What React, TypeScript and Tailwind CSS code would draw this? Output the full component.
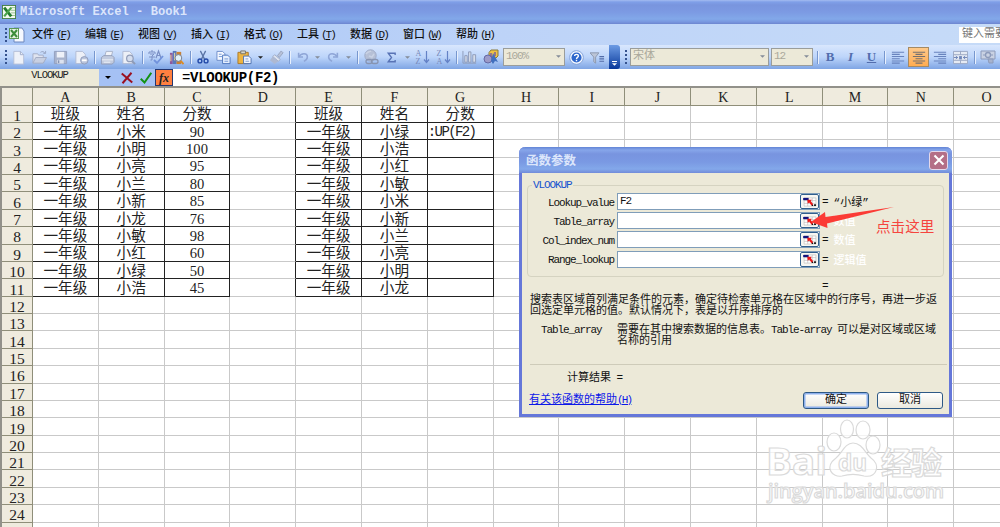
import React from "react";

type CellValue = string | number;

const columns = "ABCDEFGHIJKLMNO".split("");
const ROW_COUNT = 24;

const leftTable: CellValue[][] = [
  ["班级", "姓名", "分数"],
  ["一年级", "小米", 90],
  ["一年级", "小明", 100],
  ["一年级", "小亮", 95],
  ["一年级", "小兰", 80],
  ["一年级", "小新", 85],
  ["一年级", "小龙", 76],
  ["一年级", "小敏", 98],
  ["一年级", "小红", 60],
  ["一年级", "小绿", 50],
  ["一年级", "小浩", 45],
];

const rightTable: CellValue[][] = [
  ["班级", "姓名", "分数"],
  ["一年级", "小绿", ":UP(F2)"],
  ["一年级", "小浩", ""],
  ["一年级", "小红", ""],
  ["一年级", "小敏", ""],
  ["一年级", "小米", ""],
  ["一年级", "小新", ""],
  ["一年级", "小兰", ""],
  ["一年级", "小亮", ""],
  ["一年级", "小明", ""],
  ["一年级", "小龙", ""],
];

const menus = [
  { label: "文件", hotkey: "F" },
  { label: "编辑", hotkey: "E" },
  { label: "视图", hotkey: "V" },
  { label: "插入", hotkey: "I" },
  { label: "格式", hotkey: "O" },
  { label: "工具", hotkey: "T" },
  { label: "数据", hotkey: "D" },
  { label: "窗口", hotkey: "W" },
  { label: "帮助", hotkey: "H" },
];

const args = [
  { name: "Lookup_value", value: "F2", result: "“小绿”", filled: true },
  { name: "Table_array", value: "", result: "数值", filled: false },
  { name: "Col_index_num", value: "", result: "数值", filled: false },
  { name: "Range_lookup", value: "", result: "逻辑值", filled: false },
];

const Svg: React.FC<{ children: React.ReactNode; className?: string }> = ({
  children,
  className = "size-[15px]",
}) => (
  <svg viewBox="0 0 16 16" fill="none" className={`shrink-0 ${className}`}>
    {children}
  </svg>
);

// Narrow latin text inside of the 11px interface text
const Latin: React.FC<{ children: React.ReactNode }> = ({ children }) => (
  <span className="tracking-[-1.1px]">{children}</span>
);

const ExcelLogo: React.FC = () => (
  <Svg className="size-[14px]">
    <rect x="0.5" y="0.5" width="15" height="15" fill="#f4faf0" stroke="#3f7d3c" />
    <path d="M10 3h5M10 6h5M10 9h5M10 12h5" stroke="#8fba89" />
    <path d="M2.5 3 10.5 13" stroke="#237a2b" strokeWidth="3.2" />
    <path d="M10.5 3 2.5 13" stroke="#4aa34b" strokeWidth="2.6" />
  </Svg>
);

const NewIcon = () => (
  <Svg>
    <path d="M3 1.5h7l3.500 3.500v10h-10.500z" fill="#eef1f8" stroke="#b5bfd8" />
    <path d="M10 1.5v3.500h3.500" stroke="#9faccb" />
  </Svg>
);

const OpenIcon = () => (
  <Svg>
    <path d="M1 14V4h5l1 1.500h5V8" fill="#dfe4f0" stroke="#a5aec5" />
    <path d="M1 14 4 8h11.500l-3.500 6z" fill="#c8d0e2" stroke="#a2abc2" />
    <path d="M9 2.500c2-1.500 4-1 5 1.500M12 3.500h2.500V1" stroke="#98a4c1" />
  </Svg>
);

const SaveIcon = () => (
  <Svg>
    <path d="M1.500 1.500h13v13h-13z" fill="#a8b3cd" stroke="#929fbe" />
    <path d="M4 2h8v6H4z" fill="#eef1f8" />
    <path d="M4.500 10.500h7v4h-7z" fill="#dce2ef" />
    <path d="M6 11v3" stroke="#8491b2" strokeWidth="1.5" />
  </Svg>
);

const PermissionIcon = () => (
  <Svg>
    <path d="M2 1.500h7l3 3v10H2z" fill="#edf0f7" stroke="#b1bbd3" />
    <circle cx="11" cy="11" r="4" fill="#bac4db" stroke="#909dbb" />
    <path d="M8.500 11h5" stroke="#fff" strokeWidth="2" />
  </Svg>
);

const PrintIcon = () => (
  <Svg>
    <path d="M5 7 6.500 1.500h7L12 7" fill="#f1f3f8" stroke="#a8b1c8" />
    <path d="M1.500 8 4 6h9l2 2v5l-2 2H1.500z" fill="#c2cbdf" stroke="#939eb9" />
    <path d="M2 10.500h12M4 13h7" stroke="#f0f3f9" />
  </Svg>
);

const PreviewIcon = () => (
  <Svg>
    <path d="M2 1.500h7l3 3v10H2z" fill="#edf0f7" stroke="#b1bbd3" />
    <circle cx="9.5" cy="9" r="3.5" fill="#d6deee" stroke="#929eb9" strokeWidth="1.3" />
    <path d="m12 12 3 3" stroke="#8e9ab5" strokeWidth="2" />
  </Svg>
);

const SpellIcon = () => (
  <Svg className="size-[16px]">
    <path d="M1 3h6M1 3v2M7 3v2M4 1v2M2 5h4L4 7v4H2.500M1 8h6" stroke="#7a8fc4" />
    <path d="m8 9 2.500-7L13 9M9 6.500h3.500" stroke="#7a8fc4" strokeWidth="1.2" />
    <path d="m6 11 3 3 6-7" stroke="#7192dc" strokeWidth="1.8" />
  </Svg>
);

const ResearchIcon = () => (
  <Svg>
    <path d="M1 3h3v12H1z" fill="#8b59a0" />
    <path d="M4 1h4v14H4z" fill="#5b79ba" />
    <path d="M8 2h5v13H8z" fill="#c98235" />
    <path d="M2 5v7M6 3v8" stroke="#f0dda0" />
    <circle cx="10" cy="8.5" r="3.6" fill="#e2f0f8" stroke="#727c8f" />
    <path d="m12.500 11.500 3 3.500" stroke="#dc8b25" strokeWidth="2" />
  </Svg>
);

const CutIcon = () => (
  <Svg className="size-[14px]">
    <path d="m5 1 5 10M11 1 6 11" stroke="#5b74a5" strokeWidth="1.5" />
    <circle cx="4.5" cy="12.5" r="2.2" stroke="#234aa8" strokeWidth="1.6" />
    <circle cx="11.5" cy="12.5" r="2.2" stroke="#234aa8" strokeWidth="1.6" />
  </Svg>
);

const CopyIcon = () => (
  <Svg>
    <path d="M1 1.500h6L9.500 4v7H1z" fill="#f6f9ff" stroke="#6c8cc9" />
    <path d="M7 5.500h5.500L15 8v6.500H7z" fill="#e6effd" stroke="#4d75bd" />
    <path d="M3 4.500h3M3 7h4M9 9.500h4M9 12h4" stroke="#6f95d5" />
  </Svg>
);

const PasteIcon = () => (
  <Svg>
    <path d="M1 2.500h11v12H1z" fill="#edb441" stroke="#a9782b" />
    <path d="M4 1h5v3H4z" fill="#d7d6cd" stroke="#777265" />
    <path d="M7 6.500h5.500L15 9v5.500H7z" fill="#f3f7ff" stroke="#4c70b0" />
    <path d="M9 9.500h3M9 12h4" stroke="#7b9bd2" />
  </Svg>
);

const BrushIcon = () => (
  <Svg>
    <path d="m9 6 4-5 2 2-4 5z" fill="#b7c1d8" stroke="#98a4be" />
    <path d="m6 5 6 5-2 2-6-5z" fill="#dde3ef" stroke="#9eabc5" />
    <path d="M4 7 1 11l5 4 4-3z" fill="#aeb9d2" />
  </Svg>
);

const UndoIcon = () => (
  <Svg className="size-[14px]">
    <path d="M3 3v5h5" stroke="#8fa6d7" strokeWidth="1.8" />
    <path d="M3 8c3-5 10-5 10 0 0 3-2 4-4 5" stroke="#8fa6d7" strokeWidth="1.8" />
  </Svg>
);

const RedoIcon = () => (
  <Svg className="size-[14px]">
    <path d="M13 3v5H8" stroke="#8fa6d7" strokeWidth="1.8" />
    <path d="M13 8C10 3 3 3 3 8c0 3 2 4 4 5" stroke="#8fa6d7" strokeWidth="1.8" />
  </Svg>
);

const LinkIcon = () => (
  <Svg className="size-[16px]">
    <circle cx="7.5" cy="6.5" r="5.7" fill="#b6c0d6" stroke="#a0adc9" />
    <path d="M3 5c2-3 4-2 5-3M6 7l3 1 2-3" stroke="#c9d2e4" strokeWidth="1.5" />
    <rect x="3" y="10.5" width="6" height="4" rx="2" stroke="#8794b1" strokeWidth="1.3" />
    <rect x="8.5" y="10.5" width="6.5" height="4" rx="2" stroke="#8794b1" strokeWidth="1.3" />
  </Svg>
);

const SumIcon = () => (
  <Svg className="size-[13px]">
    <path d="M12.500 5V2.800H4L8 8l-4 5.200h8.500V11" stroke="#5873b5" strokeWidth="1.7" />
  </Svg>
);

const SortIcon: React.FC<{ letters: string }> = ({ letters }) => (
  <span className="flex items-center">
    <span className="flex w-[7px] flex-col gap-px font-['Liberation_Serif',serif] text-[8px] leading-[7px] text-[#7789b9]">
      <span className="h-[7px]">{letters[0]}</span>
      <span className="h-[7px]">{letters[1]}</span>
    </span>
    <svg viewBox="0 0 7 14" fill="none" className="h-[14px] w-[7px]">
      <path d="M3.500 1v11M1 9.500l2.500 3 2.500-3" stroke="#6482c6" strokeWidth="1.2" />
    </svg>
  </span>
);

const ChartIcon = () => (
  <Svg>
    <path d="M1 1v13h14" stroke="#8e9bb9" />
    <path d="M3 6h2.500v7H3zM7 2h2.500v11H7zM11.500 5h3v8h-3z" fill="#d6ddea" stroke="#8e9bb9" />
  </Svg>
);

const DrawingIcon = () => (
  <Svg className="size-[16px]">
    <path d="M6 3.500 8 1h7v6l-2 2H6z" fill="#f1c244" stroke="#8b7b3b" />
    <circle cx="5" cy="10" r="4" fill="#9c9ac7" stroke="#6468a4" />
    <path d="M8 12 10 4l5 9-3-1-2 3z" fill="#416fbe" />
    <path d="M8 4v4M12 3v4" stroke="#7158a4" strokeWidth="1.4" />
  </Svg>
);

const HelpIcon = () => (
  <Svg>
    <circle cx="8" cy="8" r="7.3" fill="#f4f8ff" stroke="#7f9fd8" />
    <circle cx="8" cy="8" r="5.4" fill="#2e67cc" />
    <path d="M6 6.500c0-2.500 4-2.500 4 0 0 1.500-2 1.300-2 3M8 10.500v1.500" stroke="#fff" strokeWidth="1.5" />
  </Svg>
);

const FilterIcon = () => (
  <Svg>
    <path d="M0 3h9.500L6 7.500V14l-2-1.500v-5z" fill="#bcc5d6" stroke="#8c97ae" />
    <path d="M10 7h5M10 9.500h5M10 12h5" stroke="#526ca8" strokeWidth="1.2" />
  </Svg>
);

const AlignIcon: React.FC<{ kind: "left" | "center" | "right" }> = ({ kind }) => {
  const paths = {
    left: "M1 2.500h14M1 5h9M1 7.500h14M1 10h9M1 12.500h14M1 15h9",
    center: "M1 2.500h14M4 5h8M1 7.500h14M4 10h8M1 12.500h14M4 15h8",
    right: "M1 2.500h14M6 5h9M1 7.500h14M6 10h9M1 12.500h14M6 15h9",
  };
  return (
    <Svg className="size-[14px]">
      <path d={paths[kind]} stroke={kind === "center" ? "#76706f" : "#6883bd"} strokeWidth="1.2" />
    </Svg>
  );
};

const MergeIcon = () => (
  <Svg>
    <path d="M.5 1.500h15v13H.5zM.5 5h15M.5 11h15M8 1v4M8 11v4" fill="#e5eaf3" stroke="#9ba8c3" />
    <path d="M1 8h4M11 8h4M3 6.500 5 8 3 9.500M13 6.500 11 8l2 1.500" stroke="#6e84b6" />
    <path d="M6.500 6.500h3v3.500h-3z" fill="#7188ba" />
  </Svg>
);

const CurrencyIcon = () => (
  <Svg className="size-[16px]">
    <path d="M1 2h14v8H1z" fill="#c9d1e2" stroke="#8c9aba" />
    <circle cx="8" cy="6" r="2.5" stroke="#8c9aba" strokeWidth="1.3" />
    <path d="M4 5v2M12 5v2" stroke="#8c9aba" />
    <path d="M8 10h5v4H9z" fill="#a7b3cd" stroke="#8c9aba" />
  </Svg>
);

const Slot: React.FC<{ children: React.ReactNode; className?: string }> = ({
  children,
  className = "w-[21px]",
}) => <div className={`flex h-full shrink-0 items-center justify-center ${className}`}>{children}</div>;

const Separator: React.FC<{ className?: string }> = ({ className = "w-[6px]" }) => (
  <div className={`flex shrink-0 justify-center ${className}`}>
    <span className="h-[13px] w-px bg-[#7797cf] shadow-[1px_0_#e8f0fd]" />
  </div>
);

const Caret: React.FC<{ className?: string }> = ({ className = "text-[#858c98] w-[5px]" }) => (
  <svg viewBox="0 0 6 3" className={`h-[3px] ${className}`}>
    <path d="M0 0h6L3 3z" fill="currentColor" />
  </svg>
);

const Grip: React.FC = () => (
  <div className="flex w-[2px] shrink-0 flex-col gap-[2px]">
    <i className="size-[2px] bg-[#36538e]" />
    <i className="size-[2px] bg-[#36538e]" />
    <i className="size-[2px] bg-[#36538e]" />
    <i className="size-[2px] bg-[#36538e]" />
  </div>
);

const Combo: React.FC<{ text: string; className: string }> = ({ text, className }) => (
  <div
    className={`flex h-[18px] shrink-0 items-center justify-between border border-[#9a9d9b] bg-[#ece9d8] pr-[3px] pb-[2px] pl-[2px] text-[11px] text-[#aaa89b] ${className}`}
  >
    <span>{text}</span>
    <Caret />
  </div>
);

const TitleBar: React.FC = () => (
  <header className="flex h-[24px] items-center bg-[linear-gradient(#a4bcf0_0px,#7f9fe8_2px,#7995de_5px,#7c9ae3_12px,#82a8e9_19px,#7896df_22px,#6c85cf_24px)] pl-[2px]">
    <ExcelLogo />
    <h1 className="ml-[4px] text-[12.1px] font-bold text-[#dbe5fb] whitespace-pre">Microsoft Excel - Book1</h1>
  </header>
);

const MenuBar: React.FC = () => (
  <nav className="flex h-[21px] items-center bg-linear-to-r from-[#a5c3f5] via-[#bdd3f8] to-[#c6dbf8] pl-[5px]">
    <Grip />
    <Svg className="ml-[2px] size-[16px]">
      <path d="M5 1h8l2 3v11H5z" fill="#f5f8ff" stroke="#6d87bd" />
      <rect x="0.5" y="1.5" width="9" height="10" fill="#e4f1df" stroke="#5b9854" />
      <path d="m2 3 6 7M8 3l-6 7" stroke="#3c8d3a" strokeWidth="2" />
    </Svg>
    <ul className="ml-[7px] flex">
      {menus.map((menu) => (
        <li key={menu.hotkey} className="w-[53px] shrink-0 text-[11px] leading-[20px] font-medium whitespace-nowrap text-[#111]">
          {menu.label}
          <span className="ml-[2px] tracking-[-2px]">
            (<u>{menu.hotkey}</u>)
          </span>
        </li>
      ))}
    </ul>
    <div className="ml-auto h-[16px] w-[41px] shrink-0 overflow-hidden bg-white pl-[3px] text-[11px] leading-[14px] whitespace-nowrap text-[#777]">
      键入需要
    </div>
  </nav>
);

const Toolbar: React.FC = () => (
  <div className="flex h-[24px] items-center bg-linear-to-b from-[#d9e7fd] via-[#bdd5fa] to-[#7fa5e4]">
    <div className="ml-[5px] flex h-full shrink-0 items-center">
      <Grip />
      <Slot className="ml-px w-[21px]"><NewIcon /></Slot>
      <Slot><OpenIcon /></Slot>
      <Slot><SaveIcon /></Slot>
      <Slot><PermissionIcon /></Slot>
      <Separator className="w-[5px]" />
      <Slot><PrintIcon /></Slot>
      <Slot><PreviewIcon /></Slot>
      <Separator />
      <Slot><SpellIcon /></Slot>
      <Slot><ResearchIcon /></Slot>
      <Separator />
      <Slot className="w-[20px]"><CutIcon /></Slot>
      <Slot><CopyIcon /></Slot>
      <Slot><PasteIcon /></Slot>
      <Slot className="w-[11px]"><Caret className="w-[5px] text-[#222]" /></Slot>
      <Slot><BrushIcon /></Slot>
      <Separator className="w-[5px]" />
      <Slot><UndoIcon /></Slot>
      <Slot className="w-[9px]"><Caret /></Slot>
      <Slot><RedoIcon /></Slot>
      <Slot className="w-[11px]"><Caret /></Slot>
      <Separator />
      <Slot><LinkIcon /></Slot>
      <Slot><SumIcon /></Slot>
      <Slot className="w-[10px]"><Caret /></Slot>
      <Slot><SortIcon letters="AZ" /></Slot>
      <Slot><SortIcon letters="ZA" /></Slot>
      <Separator className="w-[5px]" />
      <Slot><ChartIcon /></Slot>
      <Slot><DrawingIcon /></Slot>
      <Combo text="100%" className="ml-[2px] w-[62px] tracking-[-1.1px]" />
      <Slot className="ml-px w-[21px]"><HelpIcon /></Slot>
      <Slot><FilterIcon /></Slot>
      <div className="ml-px flex h-full w-[11px] flex-col items-center justify-end gap-px rounded-r-[3px] bg-linear-to-b from-[#6d9be4] to-[#07379a] pb-[3px]">
        <span className="h-px w-[5px] bg-white" />
        <Caret className="w-[5px] text-white" />
      </div>
    </div>
    <div className="ml-[5px] flex h-full shrink-0 items-center">
      <Grip />
      <Combo text="宋体" className="ml-[3px] w-[139px]" />
      <Combo text="12" className="ml-[2px] w-[42px] tracking-[-1.1px]" />
      <Separator className="ml-px w-[6px]" />
      <Slot className="w-[20px] font-['Liberation_Serif',serif] text-[13px] text-[#526dad]"><b>B</b></Slot>
      <Slot className="w-[21px] font-['Liberation_Serif',serif] text-[13px] text-[#526dad]"><b className="italic">I</b></Slot>
      <Slot className="w-[21px] font-['Liberation_Serif',serif] text-[13px] text-[#526dad]"><b className="underline">U</b></Slot>
      <Separator className="w-[5px]" />
      <Slot><AlignIcon kind="left" /></Slot>
      <div className="flex h-[20px] w-[21px] items-center justify-center border border-[#a58a63] bg-linear-to-b from-[#ffc989] to-[#ffac50]">
        <AlignIcon kind="center" />
      </div>
      <Slot><AlignIcon kind="right" /></Slot>
      <Slot><MergeIcon /></Slot>
      <Separator />
      <Slot><CurrencyIcon /></Slot>
    </div>
  </div>
);

const FormulaBar: React.FC = () => (
  <div className="flex h-[17px] items-center bg-white">
    <div className="h-full w-[99px] bg-[#ece9d8] text-center text-[10.5px] leading-[13px] text-[#222]">
      <Latin>VLOOKUP</Latin>
    </div>
    <div className="flex h-full w-[56px] items-center bg-[#a5c1f4]">
      <Slot className="w-[17px]"><Caret className="w-[6px] text-black" /></Slot>
      <Slot className="w-[22px]">
        <Svg className="size-[12px]">
          <path d="m1 2 14 12M14 1 2 15" stroke="#9b1020" strokeWidth="2.6" />
        </Svg>
      </Slot>
      <Slot className="w-[15px]">
        <Svg className="size-[12px]">
          <path d="m1 9 5 5L15 1" stroke="#129213" strokeWidth="2.6" />
        </Svg>
      </Slot>
    </div>
    <div className="flex h-[17px] w-[18px] items-center justify-center border border-[#25366f] bg-[#ff8040] font-['Liberation_Serif',serif] text-[12px] font-bold text-[#222] italic">
      fx
    </div>
    <div className="ml-[9px] pt-[2px] text-[14px] leading-[17px] tracking-[-0.3px] text-black">
      =<b>VLOOKUP(F2)</b>
    </div>
  </div>
);

const getCell = (row: number, col: number): CellValue | undefined => {
  if (col < 3) return leftTable[row]?.[col];
  if (col >= 4 && col < 7) return rightTable[row]?.[col - 4];
  return undefined;
};

const cellBorder = (row: number, col: number) => {
  if (row > 10) return "border-[#c9c9c9]";
  if (col < 3 || (col >= 4 && col < 7)) return "border-[#222]";
  // column D closes the left side of the second table
  if (col === 3) return "border-r-[#222] border-b-[#c9c9c9]";
  return "border-[#c9c9c9]";
};

const cellText = (value: CellValue | undefined) => {
  if (typeof value === "number") return "justify-center pt-[2px] font-['Liberation_Serif',serif] text-[14.6px]";
  if (value === ":UP(F2)") return "justify-start pt-[2px] text-[14px] tracking-[-1.6px]";
  return "justify-center pt-[4px] text-[14.6px]";
};

const Cell: React.FC<{ row: number; col: number }> = ({ row, col }) => {
  const value = getCell(row, col);
  return (
    <div
      className={`flex w-[65.8px] shrink-0 items-center border-r border-b leading-[17px] whitespace-nowrap text-[#222] ${cellBorder(row, col)} ${cellText(value)}`}
    >
      {value}
    </div>
  );
};

const Sheet: React.FC = () => (
  <main className="h-[441px] overflow-hidden border-t-2 border-l-2 border-[#92918a] bg-white">
    <div className="flex h-[17.6px]">
      <div className="w-[31px] shrink-0 border-r border-b border-[#8f8e79] bg-[#efebde]" />
      {columns.map((column) => (
        <div
          key={column}
          className="flex w-[65.8px] shrink-0 items-center justify-center border-r border-b border-[#8f8e79] bg-[#efebde] pt-[3px] font-['Liberation_Serif',serif] text-[14px] leading-[16px] text-[#222]"
        >
          {column}
        </div>
      ))}
    </div>
    {Array.from({ length: ROW_COUNT }, (_, row) => (
      <div key={row} className="flex h-[17.38px]">
        <div className="flex w-[31px] shrink-0 items-center justify-center border-r border-b border-[#8f8e79] bg-[#efebde] pt-[3px] font-['Liberation_Serif',serif] text-[15.5px] leading-[17px] text-[#222]">
          {row + 1}
        </div>
        {columns.map((column, col) => (
          <Cell key={column} row={row} col={col} />
        ))}
      </div>
    ))}
    <div className="flex h-[5px]">
      <div className="w-[31px] shrink-0 border-r border-[#8f8e79] bg-[#efebde]" />
      {columns.map((column) => (
        <div key={column} className="w-[65.8px] shrink-0 border-r border-[#c9c9c9]" />
      ))}
    </div>
  </main>
);

const RangePicker: React.FC = () => (
  <button className="flex h-[15px] w-[19px] shrink-0 items-center justify-center rounded-[2px] border-[1.5px] border-[#305f8d] bg-[#f8f7f2]">
    <svg viewBox="0 0 15 11" className="h-[10px] w-[14px]">
      <path d="M1 1h13v9H1zM1 4h13M1 7h13M5 1v9M10 1v9" fill="#fff" stroke="#b9b9b9" strokeWidth=".7" />
      <path d="M0 1h6v2.500H0z" fill="#12127d" />
      <path d="M4.500 3h5L8.300 4.500 11 8 9.300 9.500 6.600 6 5 7.500z" fill="#ed1616" />
      <path d="M9.500 8.500h1.500v1.500H9.500zM12 8h2v2h-2z" fill="#111" />
    </svg>
  </button>
);

const DialogButton: React.FC<{ children: React.ReactNode; primary?: boolean }> = ({
  children,
  primary,
}) => (
  <button
    className={`h-[17px] w-[66px] rounded-[3px] border border-[#2d5986] bg-linear-to-b from-white to-[#ebe9df] text-[11px] leading-[15px] ${
      primary ? "shadow-[inset_0_0_0_1.5px_#8db0ed]" : ""
    }`}
  >
    {children}
  </button>
);

const FunctionDialog: React.FC = () => (
  <section className="absolute top-[147px] left-[519px] flex h-[270px] w-[433px] flex-col rounded-t-[6px] border-x-[3px] border-b-[3px] border-[#6577d9] bg-[#ece9d8] text-[11px] leading-[11px] text-[#111]">
    <header className="-mx-[3px] flex h-[26px] shrink-0 items-center justify-between rounded-t-[6px] bg-[linear-gradient(#6284d6_0px,#86a6ea_3px,#7894df_7px,#7a99e3_15px,#83a8ea_22px,#718bd9_26px)] pr-[4px] pl-[7px]">
      <h2 className="pt-[4px] text-[12.5px] font-bold text-[#dce6fb]">函数参数</h2>
      <button className="flex size-[19px] items-center justify-center rounded-[3px] border border-[#e4d9eb] bg-[#b46f87]">
        <Svg className="size-[12px]">
          <path d="m2 2 12 12M14 2 2 14" stroke="#fff" strokeWidth="2.8" />
        </Svg>
      </button>
    </header>

    <fieldset className="mx-[5px] mt-[7px] h-[97px] shrink-0 rounded-[4px] border border-[#d5d3c1] pt-[1px]">
      <legend className="ml-[4px] h-[11px] px-px text-[#1552cf]">
        <Latin>VLOOKUP</Latin>
      </legend>
      {args.map((arg) => (
        <div key={arg.name} className="flex h-[19.2px] items-center">
          <label className="w-[86px] pt-[3px] text-right">
            <Latin>{arg.name}</Latin>
          </label>
          <div className="ml-[3px] flex h-[17px] w-[203px] items-center justify-between border border-[#7f9db9] bg-white pl-[2px]">
            <Latin>{arg.value}</Latin>
            <RangePicker />
          </div>
          <span className="ml-[2px] pt-[2px]">=</span>
          <span className={`ml-[5px] pt-[4px] whitespace-nowrap ${arg.filled ? "text-[#111]" : "font-medium text-white"}`}>
            {arg.result}
          </span>
        </div>
      ))}
    </fieldset>

    <div className="mt-[4px] ml-[300px] h-[11px]">=</div>
    <p className="mt-[3px] ml-[8px] whitespace-nowrap">
      搜索表区域首列满足条件的元素，确定待检索单元格在区域中的行序号，再进一步返
      <br />
      回选定单元格的值。默认情况下，表是以升序排序的
    </p>
    <div className="mt-[8px] ml-[19px] flex whitespace-nowrap">
      <span className="w-[76px]">
        <Latin>Table_array</Latin>
      </span>
      <p>
        需要在其中搜索数据的信息表。<Latin>Table-array </Latin>可以是对区域或区域
        <br />
        名称的引用
      </p>
    </div>
    <hr className="mt-[17px] mr-[2px] ml-[8px] border-[#cecbb9]" />
    <div className="mt-[8px] ml-[45px]">
      计算结果<Latin> =</Latin>
    </div>
    <footer className="mt-[8px] flex items-center pr-[6px] pl-[7px]">
      <a className="mr-auto text-[#0c18e8] underline">
        有关该函数的帮助<span className="tracking-[-1.8px]">(H)</span>
      </a>
      <div className="flex gap-[8px]">
        <DialogButton primary>确定</DialogButton>
        <DialogButton>取消</DialogButton>
      </div>
    </footer>
  </section>
);

const ClickHint: React.FC = () => (
  <>
    <svg viewBox="0 0 84 22" className="absolute top-[206px] left-[811px] h-[22px] w-[84px]">
      <path d="M0 16 14 6l.5 5L83 1 16 17.500l.5 4.500z" fill="#fb3b35" />
    </svg>
    <div className="absolute top-[218px] left-[876px] text-[14.6px] leading-[20px] whitespace-nowrap text-[#f5453e]">
      点击这里
    </div>
  </>
);

const Watermark: React.FC = () => (
  <svg
    viewBox="0 0 190 95"
    className="absolute top-[415px] left-[760px] h-[95px] w-[190px]"
    fill="#ffffff"
    fillOpacity=".75"
    stroke="#dadada"
    strokeWidth="1.2"
  >
    <ellipse cx="74" cy="27" rx="7" ry="9" />
    <ellipse cx="87" cy="14" rx="6.5" ry="9" />
    <ellipse cx="103" cy="15" rx="7" ry="9" />
    <ellipse cx="113" cy="30" rx="7" ry="9" />
    <path d="M93 28c-8 0-11 10-17 15-12 9-4 20 6 18 7-2 15-2 22 0 13 2 17-11 7-18-6-5-9-15-18-15z" />
    <g className="font-['Open_Sans','Noto_Sans_CJK_SC',sans-serif]" fontWeight="700">
      <text x="6" y="60" fontSize="37" textLength="61" lengthAdjust="spacingAndGlyphs">Bai</text>
      <text x="78" y="56" fontSize="23" textLength="29" lengthAdjust="spacingAndGlyphs">du</text>
      <text x="121" y="59" fontSize="31" textLength="61">经验</text>
      <text x="8" y="83" fontSize="20" fontWeight="600" textLength="176" lengthAdjust="spacingAndGlyphs">
        jingyan.baidu.com
      </text>
    </g>
  </svg>
);

const App: React.FC = () => {
  return (
    <div className="relative h-[527px] w-[1000px] overflow-hidden bg-white font-['Liberation_Mono','Noto_Sans_CJK_SC',monospace]">
      <TitleBar />
      <MenuBar />
      <Toolbar />
      <FormulaBar />
      <Sheet />
      <FunctionDialog />
      <ClickHint />
      <Watermark />
    </div>
  );
};

export default App;
